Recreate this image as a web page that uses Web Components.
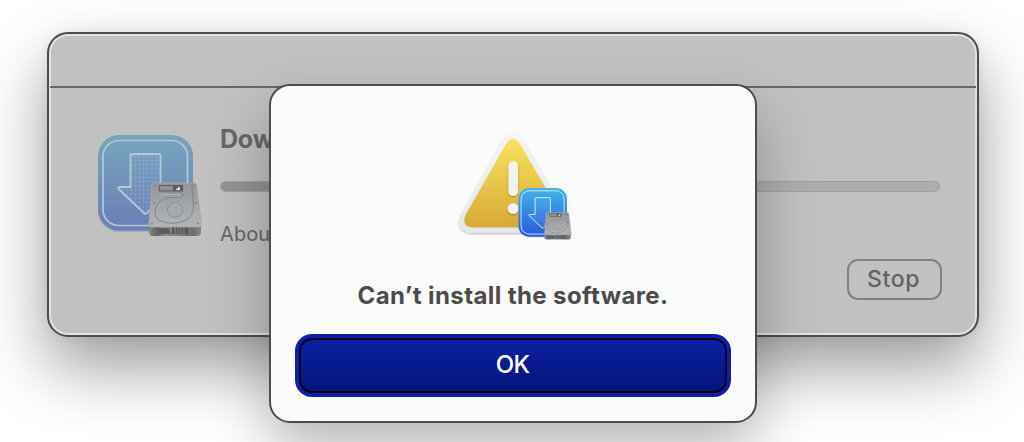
<!DOCTYPE html>
<html lang="en">
<head>
<meta charset="utf-8">
<title>Software Update</title>
<style>
  html, body {
    margin: 0;
    height: 100%;
    overflow: hidden;
    background: #fff;
    font-family: Inter, "Liberation Sans", sans-serif;
  }
</style>
</head>
<body>
<update-desktop>
  <progress-window>
    <installer-icon slot="icon" dimmed></installer-icon>
    <span slot="title">Dow</span>
    <span slot="status">Abou</span>
    <span slot="action">Stop</span>
  </progress-window>
  <alert-dialog slot="alert">
    <warning-icon slot="icon"></warning-icon>
    <span slot="message">Can’t install the software.</span>
    <push-button slot="action">OK</push-button>
  </alert-dialog>
</update-desktop>

<script>
class BaseElement extends HTMLElement {
  constructor() {
    super();
    this.attachShadow({ mode: 'open' });
    this.shadowRoot.innerHTML = this.constructor.markup;
  }
}

class UpdateDesktop extends BaseElement {
  static markup = `
    <style>
      :host {
        display: block;
        position: relative;
        box-sizing: border-box;
        width: 1024px;
        height: 442px;
        padding: 32px 45px 0 47px;
        overflow: hidden;
        background: #fff;
      }
      ::slotted([slot="alert"]) {
        position: absolute;
        left: 269px;
        top: 84px;
      }
    </style>
    <slot></slot>
    <slot name="alert"></slot>
  `;
}

class ProgressWindow extends BaseElement {
  static markup = `
    <style>
      :host {
        display: block;
        box-sizing: border-box;
        height: 305px;
        border: 2px solid #4c4c4c;
        border-radius: 21px;
        background: #c1c1c1;
        box-shadow: inset 0 0 0 2px #e2e2e2, 0 30px 66px rgba(0, 0, 0, .4), 0 0 12px rgba(0, 0, 0, .06);
        color: #666;
      }
      .titlebar {
        box-sizing: border-box;
        height: 54px;
        margin: 0 1px;
        border-bottom: 2px solid #666;
      }
      .content {
        display: grid;
        grid-template-columns: 108px 720px;
        column-gap: 15px;
        padding: 47px 0 0 48px;
      }
      .title {
        margin-top: -11px;
        font-size: 25px;
        line-height: 30px;
        font-weight: 700;
        letter-spacing: -.2px;
      }
      .track {
        box-sizing: border-box;
        height: 11px;
        margin-top: 27px;
        border: 1px solid #a0a0a0;
        border-radius: 6px;
        background: #adadad;
        overflow: hidden;
      }
      .bar {
        width: 55px;
        height: 100%;
        background: #929292;
      }
      .status {
        margin-top: 30px;
        font-size: 20px;
        line-height: 24px;
        letter-spacing: .1px;
      }
      .actions {
        display: flex;
        justify-content: flex-end;
        margin: 13px 35px 0 0;
      }
      button {
        box-sizing: border-box;
        width: 95px;
        height: 41px;
        padding: 0 2px 1px 0;
        border: 2px solid #808080;
        border-radius: 11px;
        background: transparent;
        color: #626262;
        font: 500 23px Inter, sans-serif;
        letter-spacing: .6px;
      }
    </style>
    <div class="titlebar"></div>
    <div class="content">
      <slot name="icon"></slot>
      <div>
        <div class="title"><slot name="title"></slot></div>
        <div class="track"><div class="bar"></div></div>
        <div class="status"><slot name="status"></slot></div>
      </div>
    </div>
    <div class="actions"><button><slot name="action"></slot></button></div>
  `;
}

class AlertDialog extends BaseElement {
  static markup = `
    <style>
      :host {
        display: flex;
        flex-direction: column;
        align-items: center;
        box-sizing: border-box;
        width: 488px;
        height: 339px;
        padding: 44px 24px 0;
        border: 2px solid #4c4c4c;
        border-radius: 21px;
        background: #fbfbfb;
        box-shadow: 0 28px 60px rgba(0, 0, 0, .28);
      }
      .message {
        margin-top: 44px;
        color: #4b4b4b;
        font-size: 24px;
        line-height: 30px;
        font-weight: 700;
        letter-spacing: .4px;
        white-space: nowrap;
      }
      ::slotted([slot="action"]) {
        margin-top: 23px;
      }
    </style>
    <slot name="icon"></slot>
    <div class="message"><slot name="message"></slot></div>
    <slot name="action"></slot>
  `;
}

class PushButton extends BaseElement {
  static markup = `
    <style>
      :host {
        display: block;
        box-sizing: border-box;
        align-self: stretch;
        width: 436px;
        height: 63px;
        padding: 4px;
        border-radius: 17px;
        background: #0c1fa8;
      }
      button {
        box-sizing: border-box;
        width: 100%;
        height: 100%;
        padding: 0 1px 2px 0;
        border: 2px solid #020413;
        border-radius: 13px;
        background: linear-gradient(#09209f, #04157b);
        color: #fff;
        font: 500 24px Inter, sans-serif;
        letter-spacing: -.7px;
      }
    </style>
    <button><slot></slot></button>
  `;
}

class InstallerIcon extends BaseElement {
  static markup = `
    <style>
      :host {
        display: block;
        width: 108px;
        height: 104px;
        --top: #43b5ea;
        --bottom: #2859d8;
        --line: #d9f1ff;
      }
      :host([dimmed]) {
        --top: #77a5bd;
        --bottom: #6a7eb6;
        --line: #b4c8d6;
      }
      svg {
        display: block;
        width: 100%;
        height: 100%;
        overflow: visible;
      }
    </style>
    <svg viewBox="0 0 108 104">
      <defs>
        <linearGradient id="tile" x1="0" y1="0" x2="0" y2="1">
          <stop offset="0" style="stop-color: var(--top)"/>
          <stop offset="1" style="stop-color: var(--bottom)"/>
        </linearGradient>
        <linearGradient id="metal" x1="0" y1="0" x2="0" y2="1">
          <stop offset="0" stop-color="#939799"/>
          <stop offset="1" stop-color="#b1b5b8"/>
        </linearGradient>
        <linearGradient id="front">
          <stop offset="0" stop-color="#858789"/>
          <stop offset=".15" stop-color="#606264"/>
          <stop offset=".3" stop-color="#8b8d8f"/>
          <stop offset=".85" stop-color="#6c6e70"/>
          <stop offset="1" stop-color="#858789"/>
        </linearGradient>
        <pattern id="mesh" width="4.2" height="4.2" patternUnits="userSpaceOnUse">
          <path d="M0 0H4.2M0 0V4.2" fill="none" stroke="#c8e8f7" stroke-width=".8"/>
        </pattern>
      </defs>
      <rect x="1" y="1.500" width="95" height="95.500" rx="21" fill="#000" opacity=".12"/>
      <rect x="1" y="0" width="95" height="95.5" rx="21" fill="url(#tile)"/>
      <rect x="6" y="5.5" width="84.500" height="85" rx="16" fill="none" style="stroke: var(--line)" stroke-width="1.7"/>
      <path d="M35 19H62Q63.500 19 63.500 20.500V52H75L50 78Q48.500 79.500 47 78L21.500 54Q20.500 52 23 52H33.500V20.500Q33.500 19 35 19Z" fill="url(#mesh)" fill-opacity=".34" style="stroke: var(--line)" stroke-width="1.8" stroke-linejoin="round"/>
      <path d="M52 89H104V97Q104 101 100 101H56Q52 101 52 97Z" fill="url(#front)"/>
      <path d="M60 93H72L74 99H62Z" fill="#5b5d5f"/>
      <path d="M75 92H91V99H75Z" fill="#535557"/>
      <path d="M78 92V99M81 92V99M84 92V99M87 92V99" stroke="#8b8d8f" stroke-width="1"/>
      <path d="M57 48H97Q99 48 99.500 50L104.500 89Q104.500 92 101.500 92H54.500Q51.500 92 52 89L55 50Q55.300 48 57 48Z" fill="url(#metal)" stroke="#a5a9ab" stroke-width=".8"/>
      <rect x="62.500" y="50.500" width="23" height="5.500" fill="#8f9395" stroke="#5e6163" stroke-width="1.2"/>
      <path d="M76 51H85V55.500H76Z" fill="#5a5d5f"/>
      <path d="M79 55V53.500H81V52H83V55Z" fill="#ddd"/>
      <path d="M63 58H84Q87 58 86 61Q85 63 79 62.500C66 61 58 68 58 77C58 86 68 89 78 88C90 87 97 80 96.500 71L94.500 49" fill="none" stroke="#808486" stroke-width="1"/>
      <path d="M63 59.200H83.500" stroke="#bdc0c2" stroke-width=".8"/>
      <circle cx="78" cy="75" r="7.600" fill="#a6aaad" stroke="#8d9193" stroke-width="1"/>
      <g fill="#7b7f81">
        <circle cx="58" cy="50.500" r="1"/>
        <circle cx="97" cy="50.500" r="1"/>
        <circle cx="57" cy="68" r="1"/>
        <circle cx="98.500" cy="68" r="1"/>
        <circle cx="55" cy="88.500" r="1"/>
        <circle cx="101" cy="88.500" r="1"/>
      </g>
    </svg>
  `;
}

class WarningIcon extends BaseElement {
  static markup = `
    <style>
      :host {
        display: block;
        position: relative;
        width: 116px;
        height: 107px;
        margin-left: 4px;
      }
      svg {
        display: block;
        width: 100%;
        height: 100%;
        overflow: visible;
      }
      /* badge over the lower right corner of the triangle */
      installer-icon {
        position: absolute;
        left: 61px;
        top: 58px;
        width: 55px;
        height: 53px;
      }
    </style>
    <svg viewBox="0 0 116 107">
      <defs>
        <linearGradient id="rim" x1="0" y1="0" x2="0" y2="1">
          <stop offset="0" stop-color="#f5f5f5"/>
          <stop offset="1" stop-color="#e5e5e5"/>
        </linearGradient>
        <linearGradient id="gold" x1="0" y1="0" x2="0" y2="1">
          <stop offset="0" stop-color="#f7e35e"/>
          <stop offset="1" stop-color="#d8a936"/>
        </linearGradient>
        <filter id="shade" x="-20%" y="-20%" width="140%" height="140%">
          <feDropShadow dx="0" dy="1" stdDeviation="1.200" flood-opacity=".28"/>
        </filter>
      </defs>
      <path d="M46 10Q50 3.500 56 3.500Q62 3.500 66 10L111 87Q116 101 101 103H14Q-1 101 3 87Z" fill="url(#rim)" filter="url(#shade)"/>
      <path d="M49 14Q52 9 56 9Q60 9 63 14L104 84Q110 97 98 97.500H16Q4 97 8.500 85Z" fill="url(#gold)"/>
      <g fill="#f2f2ee" filter="url(#shade)">
        <rect x="51.500" y="31" width="9.500" height="35" rx="4.700"/>
        <ellipse cx="56.200" cy="78.500" rx="5.600" ry="5.200"/>
      </g>
    </svg>
    <installer-icon></installer-icon>
  `;
}

customElements.define('installer-icon', InstallerIcon);
customElements.define('warning-icon', WarningIcon);
customElements.define('push-button', PushButton);
customElements.define('alert-dialog', AlertDialog);
customElements.define('progress-window', ProgressWindow);
customElements.define('update-desktop', UpdateDesktop);
</script>
</body>
</html>
